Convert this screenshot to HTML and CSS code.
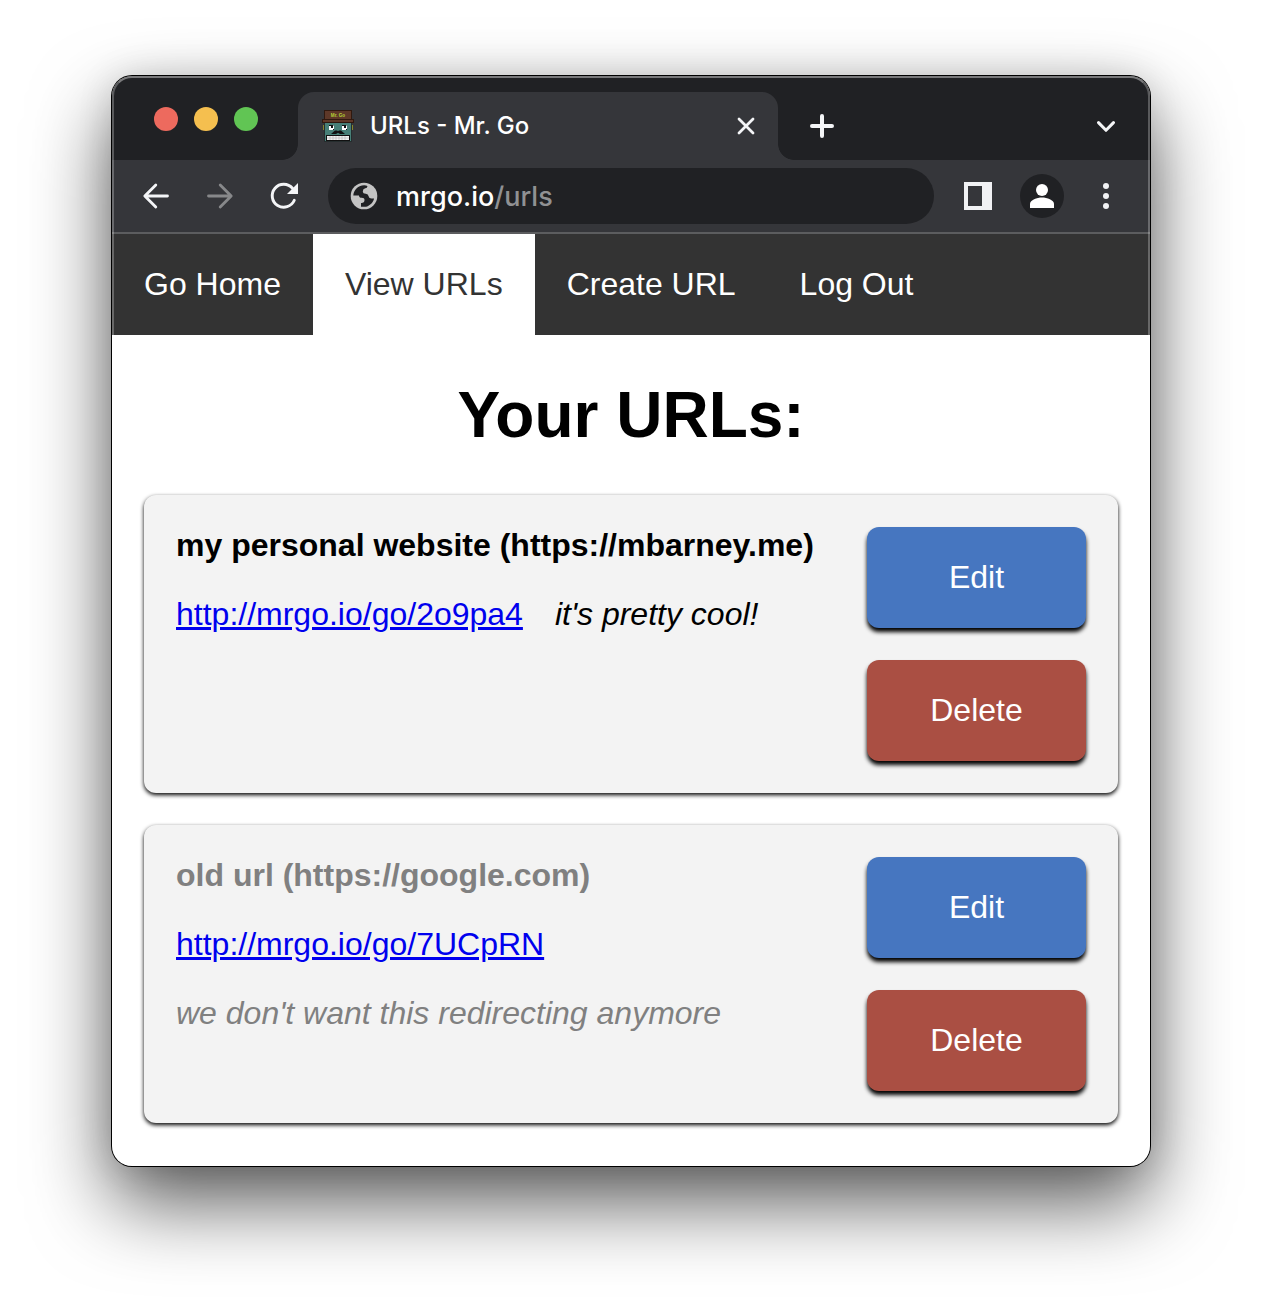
FILE: index.html
```
<!DOCTYPE html>
<html lang="en">
<head>
<meta charset="utf-8">
<title>URLs - Mr. Go</title>
<link rel="stylesheet" href="styles.css">
</head>
<body>
<div class="window">
  <header class="tabstrip">
    <div class="lights"><i class="light close"></i><i class="light minimize"></i><i class="light zoom"></i></div>
    <div class="tab">
      <svg class="favicon" width="32" height="32" viewBox="0 0 32 32">
        <path fill="#85862c" d="M1 15h30v5H1z"/>
        <path fill="#252d2e" d="M2 12h28v20H2z"/>
        <path fill="#477f77" d="M3 13h26v18H3z"/>
        <path fill="#30190f" d="M2 0h28v9h2v4H0V9h2z"/>
        <path fill="#5e3828" d="M3 1h26v8H3zM1 10h30v2H1z"/>
        <path fill="#111" d="M7 15h5v5H7zM20 15h5v5h-5z"/>
        <path fill="#fff" d="M7 16h2v2h2v2H7zM20 16h2v2h2v2h-4zM11 15.500h1V19h-1zM24 15.500h1V19h-1z"/>
        <path fill="#111" d="M9 24l4-3.500h2l1 .7 1-.7h2l4 3.500h-5l-2-1.200-2 1.200zM4 25h24v6H4z"/>
        <path fill="#f2f2f2" d="M5 26h22v4H5z"/>
        <path stroke="#a5a5a5" stroke-width=".5" d="M5 28h22M8 26v4M11 26v4M14 26v4M17 26v4M20 26v4M23 26v4"/>
        <text x="16" y="7" text-anchor="middle">Mr. Go</text>
      </svg>
      <span class="tab-title">URLs - Mr. Go</span>
      <svg class="stroke" width="20" height="20" viewBox="0 0 20 20"><path d="M3 3l14 14M17 3L3 17" stroke-width="2.8"/></svg>
    </div>
    <svg class="stroke new-tab" width="24" height="24" viewBox="0 0 24 24"><path d="M12 2v20M2 12h20" stroke-width="4"/></svg>
    <svg class="stroke chevron" width="20" height="20" viewBox="0 0 20 20"><path d="M2.500 6.600L10 14.300l7.500-7.700" stroke-width="3"/></svg>
  </header>
  <div class="toolbar">
    <svg class="stroke" width="28" height="28" viewBox="0 0 28 28"><path d="M25.500 14H3M13.800 2.900L2.800 14l11 11.100" stroke-width="2.800"/></svg>
    <svg class="stroke dim" width="28" height="28" viewBox="0 0 28 28"><path d="M2.500 14H25M14.200 2.900L25.200 14l-11 11.100" stroke-width="2.800"/></svg>
    <svg class="stroke" width="28" height="28" viewBox="0 0 28 28"><path d="M22.500 6.300A11.500 11.500 0 1 0 24.300 18.300" stroke-width="2.900"/><path class="solid" d="M28 1v11H17z"/></svg>
    <div class="address">
      <svg class="globe" width="28" height="28" viewBox="0 0 28 28"><circle cx="14" cy="14" r="13.300"/><path class="land" d="M3.300 13.500C3.600 8.500 7.300 4.500 12 3.500q3-.6 5.500.4-.2 2.300-2.200 2.300-2.500.3-2.500 3 0 2.500 3 2.500 2.500 0 2.800 2.500.4 2.600 3.200 2.400l2.300-.2C23 21 19 24.600 14.500 24.800H11V21q3.500.2 3.500-3 0-2.200-2.700-2.200-2.800 0-2.800-2.300z"/></svg>
      <span class="host">mrgo.io</span><span class="path">/urls</span>
    </div>
    <svg class="panel" width="28" height="28" viewBox="0 0 28 28"><path fill-rule="evenodd" d="M0 0h28v28H0zM4 4v20h14V4z"/></svg>
    <span class="avatar"><svg width="24" height="24" viewBox="0 0 24 24"><circle cx="12" cy="6" r="6"/><path d="M0 24v-4c0-4 7-6.500 12-6.500S24 16 24 20v4z"/></svg></span>
    <svg class="menu" width="6" height="26" viewBox="0 0 6 26"><circle cx="3" cy="3" r="3"/><circle cx="3" cy="13" r="3"/><circle cx="3" cy="23" r="3"/></svg>
  </div>
  <nav class="nav">
    <a>Go Home</a><a class="active">View URLs</a><a>Create URL</a><a>Log Out</a>
  </nav>
  <main>
    <h1>Your URLs:</h1>
    <section class="card">
      <div class="info">
        <strong>my personal website (https://mbarney.me)</strong>
        <a class="link" href="#">http://mrgo.io/go/2o9pa4</a>
        <em>it's pretty cool!</em>
      </div>
      <div class="actions"><button class="edit">Edit</button><button class="delete">Delete</button></div>
    </section>
    <section class="card inactive">
      <div class="info">
        <strong>old url (https://google.com)</strong>
        <a class="link" href="#">http://mrgo.io/go/7UCpRN</a>
        <em>we don't want this redirecting anymore</em>
      </div>
      <div class="actions"><button class="edit">Edit</button><button class="delete">Delete</button></div>
    </section>
  </main>
</div>
</body>
</html>
```
FILE: styles.css
```
* { box-sizing: border-box; }
html { background: #fff; overflow: hidden; }
body { margin: 0; padding: 76px 112px 148px; height: 1314px; font: 32px/37px "Liberation Sans", Arial, sans-serif; }
svg { display: block; flex: none; }

.window { position: relative; height: 1090px; overflow: hidden; border-radius: 20px; background: #fff; box-shadow: 0 0 0 1px #000, 0 36px 80px rgba(0, 0, 0, .66), 0 0 36px rgba(0, 0, 0, .12); }
.window::after { content: ""; position: absolute; inset: 0; border: 2px solid rgba(255, 255, 255, .26); border-top-color: rgba(255, 255, 255, .4); border-radius: 20px; pointer-events: none; }

.tabstrip { display: flex; height: 84px; padding-left: 42px; background: #202124; }
.lights { display: flex; gap: 16px; width: 144px; padding-top: 31px; }
.light { width: 24px; height: 24px; border-radius: 50%; }
.close { background: #ed6a5e; }
.minimize { background: #f5bf4f; }
.zoom { background: #61c554; }
.tab { position: relative; display: flex; align-items: center; width: 480px; height: 68px; margin-top: 16px; padding: 0 22px 0 24px; border-radius: 16px 16px 0 0; background: #35363a; }
.tab::before, .tab::after { content: ""; position: absolute; bottom: 0; width: 16px; height: 16px; }
.tab::before { left: -16px; background: radial-gradient(circle at 0 0, transparent 15.5px, #35363a 16.2px); }
.tab::after { right: -16px; background: radial-gradient(circle at 100% 0, transparent 15.5px, #35363a 16.2px); }
.favicon text { font: bold 4.6px "Liberation Sans", sans-serif; fill: #b4d335; }
.tab-title { flex: 1; margin-left: 16px; color: #fff; font: 500 24px/30px Inter, sans-serif; }
.stroke { fill: none; stroke: #f4f5f7; stroke-linecap: round; stroke-linejoin: round; }
.stroke .solid { fill: #f4f5f7; stroke: none; }
.new-tab { margin: 38px 0 0 32px; }
.chevron { margin: 40px 34px 0 auto; }

.toolbar { display: flex; align-items: center; height: 74px; padding: 0 41px 2px 30px; background: #35363a; box-shadow: inset 0 -2px #5c5d5f; }
.toolbar > .stroke { margin-right: 36px; }
.toolbar > .dim { stroke: #87888a; }
.toolbar > .stroke:nth-child(3) { margin-right: 30px; }
.address { display: flex; align-items: center; width: 606px; height: 56px; padding-left: 22px; border-radius: 28px; background: #202124; font: 500 27px/34px Inter, sans-serif; }
.address span { padding-top: 1px; }
.globe { margin-right: 18px; fill: #c4c4c4; }
.globe .land { fill: #202124; }
.host { color: #fff; }
.path { color: #909193; }
.panel { margin-left: 30px; fill: #f1f2f4; }
.avatar { display: grid; place-items: center; width: 44px; height: 44px; margin: 0 39px 0 28px; border-radius: 50%; background: #202124; fill: #fff; }
.menu { fill: #f1f2f4; }

.nav { display: flex; background: #333; color: #fff; }
.nav a { padding: 32px; }
.nav .active { background: #fff; color: #333; }

main { padding: 0 32px; }
h1 { margin: 43px 0; font-size: 64px; line-height: 74px; text-align: center; }
.card { display: flex; justify-content: space-between; margin-bottom: 32px; padding: 32px; border-radius: 12px; background: #f3f3f3; box-shadow: 0 2px 4px #000; }
.info { display: flex; flex-wrap: wrap; align-content: flex-start; gap: 32px; width: 659px; }
.info strong { width: 100%; white-space: nowrap; }
.inactive strong, .inactive em { color: #808080; }
.link { color: #0000ee; text-decoration: underline; }
.actions { display: flex; flex-direction: column; gap: 32px; width: 219px; }
button { height: 101px; padding: 0; border: 0; border-radius: 12px; color: #fff; font: inherit; box-shadow: 0 4px 4px #000; }
.edit { background: #4676c0; }
.delete { background: #aa4f43; }
```
